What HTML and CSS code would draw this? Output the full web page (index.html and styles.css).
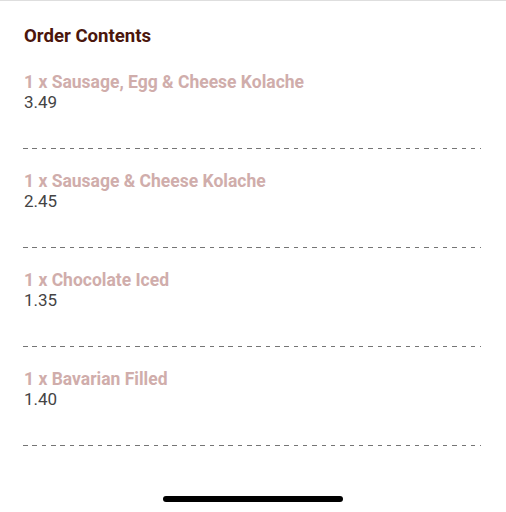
FILE: index.html
```html
<!DOCTYPE html>
<html lang="en">
<head>
<meta charset="utf-8">
<title>Order Contents</title>
<link rel="stylesheet" href="styles.css">
</head>
<body>
<div class="screen">
  <main class="content">
    <h1 class="title">Order Contents</h1>
    <ul class="items">
      <li class="item">
        <div class="item-name">1 x Sausage, Egg &amp; Cheese Kolache</div>
        <div class="item-price">3.49</div>
        <div class="divider"></div>
      </li>
      <li class="item">
        <div class="item-name">1 x Sausage &amp; Cheese Kolache</div>
        <div class="item-price">2.45</div>
        <div class="divider"></div>
      </li>
      <li class="item">
        <div class="item-name">1 x Chocolate Iced</div>
        <div class="item-price">1.35</div>
        <div class="divider"></div>
      </li>
      <li class="item">
        <div class="item-name">1 x Bavarian Filled</div>
        <div class="item-price">1.40</div>
        <div class="divider"></div>
      </li>
    </ul>
  </main>
  <div class="home-bar"></div>
</div>
</body>
</html>
```

FILE: styles.css
```css
html, body {
  margin: 0;
  padding: 0;
  background: #ffffff;
}

body {
  font-family: Roboto, "Liberation Sans", Arial, sans-serif;
}

.screen {
  width: 506px;
  height: 512px;
  box-sizing: border-box;
  border-top: 1px solid #dedede;
  display: flex;
  flex-direction: column;
  position: relative;
}

.content {
  flex: 1;
  padding: 23px 25px 0 24px;
}

.title {
  margin: 0;
  font-size: 18.6px;
  line-height: 24px;
  font-weight: 700;
  color: #4b160c;
}

.items {
  list-style: none;
  margin: 24px 0 0;
  padding: 0;
  display: flex;
  flex-direction: column;
  gap: 22px;
}

.item-name {
  font-size: 17.5px;
  line-height: 20px;
  font-weight: 700;
  color: #d0adab;
}

.item-price {
  font-size: 17px;
  line-height: 20px;
  font-weight: 400;
  color: #444444;
}

.divider {
  margin-top: 36px;
  height: 1px;
  margin-left: -1px;
  background: repeating-linear-gradient(to right, #757575 0 4.6px, transparent 4.6px 9.33px);
}

.home-bar {
  position: absolute;
  left: 163px;
  top: 495px;
  width: 180px;
  height: 6px;
  border-radius: 3px;
  background: #000000;
}
```
